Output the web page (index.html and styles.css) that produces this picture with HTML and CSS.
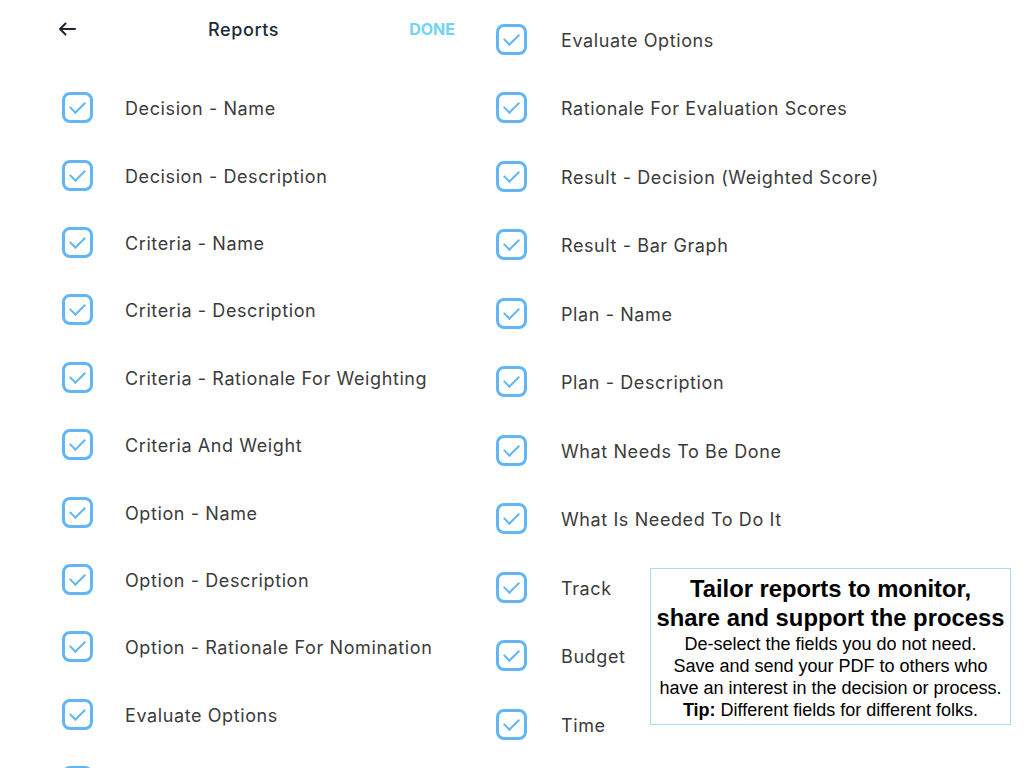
FILE: index.html
```html
<!DOCTYPE html>
<html lang="en">
<head>
    <meta charset="UTF-8">
    <meta name="viewport" content="width=device-width, initial-scale=1.0">
    <title>Reports</title>
    <link rel="stylesheet" href="styles.css">
</head>
<body>
    <div class="page">
        <!-- first screen: top of the list -->
        <div class="screen screen-left">
            <div class="topbar">
                <svg class="back" width="18" height="14" viewBox="0 0 18 14">
                    <path d="M17 7H2M7.5 1.5L2 7l5.5 5.5" fill="none" stroke="#1c2633" stroke-width="2" stroke-linecap="round" stroke-linejoin="round"/>
                </svg>
                <h1>Reports</h1>
                <span class="done">DONE</span>
            </div>
            <ul class="fields">
                <li><span class="box"></span>Decision - Name</li>
                <li><span class="box"></span>Decision - Description</li>
                <li><span class="box"></span>Criteria - Name</li>
                <li><span class="box"></span>Criteria - Description</li>
                <li><span class="box"></span>Criteria - Rationale For Weighting</li>
                <li><span class="box"></span>Criteria And Weight</li>
                <li><span class="box"></span>Option - Name</li>
                <li><span class="box"></span>Option - Description</li>
                <li><span class="box"></span>Option - Rationale For Nomination</li>
                <li><span class="box"></span>Evaluate Options</li>
                <li><span class="box"></span></li>
            </ul>
        </div>

        <!-- second screen: scrolled further down -->
        <div class="screen screen-right">
            <ul class="fields">
                <li><span class="box"></span>Evaluate Options</li>
                <li><span class="box"></span>Rationale For Evaluation Scores</li>
                <li><span class="box"></span>Result - Decision (Weighted Score)</li>
                <li><span class="box"></span>Result - Bar Graph</li>
                <li><span class="box"></span>Plan - Name</li>
                <li><span class="box"></span>Plan - Description</li>
                <li><span class="box"></span>What Needs To Be Done</li>
                <li><span class="box"></span>What Is Needed To Do It</li>
                <li><span class="box"></span>Track</li>
                <li><span class="box"></span>Budget</li>
                <li><span class="box"></span>Time</li>
            </ul>
        </div>

        <div class="callout">
            <h2>Tailor reports to monitor,<br>share and support the process</h2>
            <p>De-select the fields you do not need.<br>
            Save and send your PDF to others who<br>
            have an interest in the decision or process.<br>
            <b>Tip:</b> Different fields for different folks.</p>
        </div>
    </div>
</body>
</html>
```

FILE: styles.css
```css
* {
    margin: 0;
    padding: 0;
    box-sizing: border-box;
}

body {
    background-color: #fff;
    font-family: Inter, "Noto Sans", sans-serif;
    overflow: hidden;
}

.page {
    position: relative;
    display: flex;
    width: 1024px;
    height: 768px;
    overflow: hidden;
}

.screen-left {
    width: 496px;
    padding: 0 41px 0 58px;
}

.screen-right {
    flex-grow: 1;
    padding-top: 5px;
}

.topbar {
    height: 58px;
    display: flex;
    align-items: center;
    justify-content: space-between;
}

.topbar h1 {
    font-size: 18px;
    font-weight: 500;
    color: #1e2a3a;
    letter-spacing: 0.6px;
    margin-left: 2px;
}

.done {
    font-size: 16px;
    font-weight: 700;
    color: #72d3f2;
}

.fields {
    list-style: none;
}

.fields li {
    display: flex;
    align-items: center;
    height: 67.4px;
    padding-top: 2px;
    font-size: 18px;
    color: #3b3b3b;
    letter-spacing: 0.6px;
}

.fields li .box {
    margin-top: -2px;
}

.screen-left .fields {
    padding-top: 16px;
    padding-left: 4px;
}

.screen-right .fields li {
    height: 68.5px;
}

.screen-right .box {
    margin-right: 34px;
}

.box {
    position: relative;
    width: 31px;
    height: 31px;
    border: 3px solid #62b6f6;
    border-radius: 8px;
    margin-right: 32px;
    flex-shrink: 0;
}

.box:after {
    content: "";
    position: absolute;
    left: 8px;
    top: 3px;
    width: 7px;
    height: 13px;
    border: solid #62b6f6;
    border-width: 0 2px 2px 0;
    transform: rotate(45deg);
}

/* info box laid over the second screen */
.callout {
    position: absolute;
    left: 650px;
    top: 568px;
    width: 361px;
    height: 157px;
    background-color: #fff;
    border: 1.5px solid #a9dbf7;
    padding-top: 6px;
    text-align: center;
    font-family: "Liberation Sans", Arial, sans-serif;
    color: #000;
}

.callout h2 {
    font-size: 23.8px;
    line-height: 28.5px;
    font-weight: 700;
}

.callout p {
    margin-top: 1px;
    font-size: 18px;
    line-height: 22px;
}
```
